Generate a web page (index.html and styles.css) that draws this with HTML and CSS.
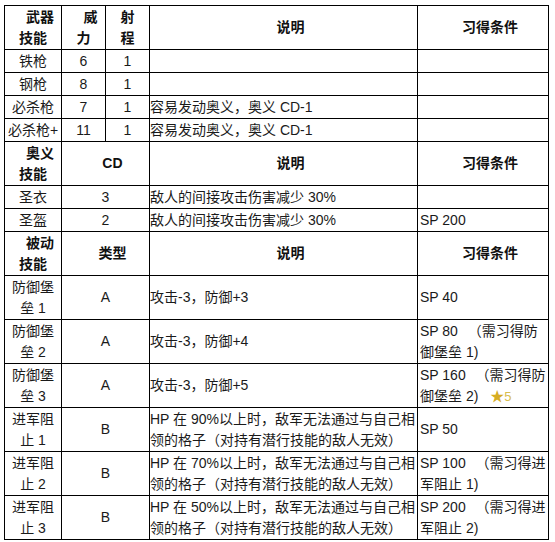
FILE: index.html
```html
<!DOCTYPE html>
<html lang="zh-CN">
<head>
<meta charset="utf-8">
<title>技能表</title>
<link rel="stylesheet" href="styles.css">
</head>
<body>
<table class="skills">
  <colgroup>
    <col class="c-name">
    <col class="c-a">
    <col class="c-b">
    <col class="c-desc">
    <col class="c-cond">
  </colgroup>
  <tbody>
    <tr class="head">
      <th>　武器<br>技能</th>
      <th>　威<br>力</th>
      <th>射<br>程</th>
      <th class="desc-h">　说明</th>
      <th>　习得条件</th>
    </tr>
    <tr>
      <td>铁枪</td><td>6</td><td>1</td><td class="desc"></td><td class="cond"></td>
    </tr>
    <tr>
      <td>钢枪</td><td>8</td><td>1</td><td class="desc"></td><td class="cond"></td>
    </tr>
    <tr>
      <td>必杀枪</td><td>7</td><td>1</td><td class="desc">容易发动奥义，奥义 CD-1</td><td class="cond"></td>
    </tr>
    <tr>
      <td class="tight">必杀枪+</td><td>11</td><td>1</td><td class="desc">容易发动奥义，奥义 CD-1</td><td class="cond"></td>
    </tr>

    <tr class="head">
      <th>　奥义<br>技能</th>
      <th colspan="2">　CD</th>
      <th class="desc-h">　说明</th>
      <th>　习得条件</th>
    </tr>
    <tr>
      <td>圣衣</td><td colspan="2">3</td><td class="desc">敌人的间接攻击伤害减少 30%</td><td class="cond"></td>
    </tr>
    <tr>
      <td>圣盔</td><td colspan="2">2</td><td class="desc">敌人的间接攻击伤害减少 30%</td><td class="cond">SP 200</td>
    </tr>

    <tr class="head">
      <th>　被动<br>技能</th>
      <th colspan="2">　类型</th>
      <th class="desc-h">　说明</th>
      <th>　习得条件</th>
    </tr>
    <tr>
      <td>防御堡<br>垒 1</td><td colspan="2">A</td><td class="desc">攻击-3，防御+3</td><td class="cond">SP 40</td>
    </tr>
    <tr>
      <td>防御堡<br>垒 2</td><td colspan="2">A</td><td class="desc">攻击-3，防御+4</td><td class="cond">SP 80 <span class="open">（</span>需习得防<br>御堡垒 1)</td>
    </tr>
    <tr>
      <td>防御堡<br>垒 3</td><td colspan="2">A</td><td class="desc">攻击-3，防御+5</td><td class="cond">SP 160 <span class="open">（</span>需习得防<br>御堡垒 2) <span class="star">★</span><span class="rank">5</span></td>
    </tr>
    <tr>
      <td>进军阻<br>止 1</td><td colspan="2">B</td><td class="desc">HP 在 90%以上时，敌军无法通过与自己相<br>领的格子（对持有潜行技能的敌人无效）</td><td class="cond">SP 50</td>
    </tr>
    <tr>
      <td>进军阻<br>止 2</td><td colspan="2">B</td><td class="desc">HP 在 70%以上时，敌军无法通过与自己相<br>领的格子（对持有潜行技能的敌人无效）</td><td class="cond">SP 100 <span class="open">（</span>需习得进<br>军阻止 1)</td>
    </tr>
    <tr>
      <td>进军阻<br>止 3</td><td colspan="2">B</td><td class="desc">HP 在 50%以上时，敌军无法通过与自己相<br>领的格子（对持有潜行技能的敌人无效）</td><td class="cond">SP 200 <span class="open">（</span>需习得进<br>军阻止 2)</td>
    </tr>
  </tbody>
</table>
</body>
</html>
```

FILE: styles.css
```css
html, body {
  background: #ffffff;
}
body {
  margin: 5px 0 0 4px;
  font-family: "Liberation Sans", "Noto Sans CJK SC", sans-serif;
  font-size: 14px;
  color: #1a1a1a;
}
.skills {
  border-collapse: collapse;
  table-layout: fixed;
  width: 545px;
}
.c-name { width: 57px; }
.c-a { width: 44px; }
.c-b { width: 44px; }
.c-desc { width: 268px; }
.c-cond { width: 131px; }

.skills th,
.skills td {
  border: 1px solid #000000;
  padding: 0.5px 1px;
  line-height: 21px;
  text-align: center;
  vertical-align: middle;
  white-space: nowrap;
  overflow: hidden;
}
.skills th {
  font-weight: bold;
  color: #111111;
}
.skills td.desc {
  text-align: left;
  padding-left: 0;
  padding-right: 0;
}
.skills td.cond {
  text-align: left;
  padding-left: 2px;
}
.skills td.tight {
  padding: 0.5px 0;
}
.open {
  margin-left: 6px;
}
.star {
  color: #d6ac22;
  font-size: 14px;
  margin-left: 8px;
}
.rank {
  color: #d8bd4e;
  font-size: 13px;
}
```
